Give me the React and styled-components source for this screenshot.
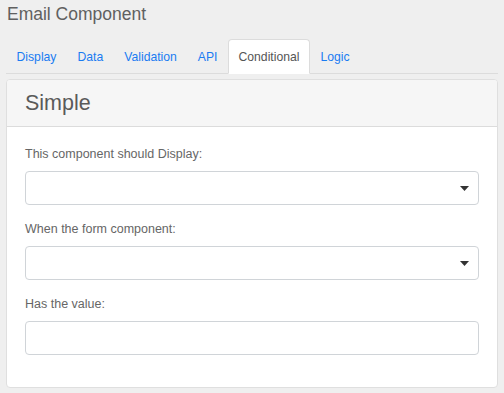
import React from "react"
import styled, { createGlobalStyle } from "styled-components"

const GlobalStyle = createGlobalStyle`
  html, body {
    margin: 0;
    padding: 0;
    background: #efefef;
    font-family: "Liberation Sans", Arial, sans-serif;
  }
`

const Page = styled.div`
  padding: 3px 6px 6px 6px;
  width: 504px;
  height: 393px;
  box-sizing: border-box;
`

const Title = styled.h4`
  margin: 0 0 0 1px;
  font-size: 17.5px;
  font-weight: normal;
  line-height: 22px;
  color: #606060;
`

const Tabs = styled.ul`
  display: flex;
  list-style: none;
  margin: 14px 0 0 0;
  padding: 0;
  border-bottom: 1px solid #dcdcdc;
`

const Tab = styled.li`
  height: 33px;
  padding: 0 9.5px;
  margin-bottom: -1px;
  display: flex;
  align-items: center;
  font-size: 12.2px;
  color: ${({ active }) => (active ? "#555" : "#1a7cf2")};
  background: ${({ active }) => (active ? "#fff" : "transparent")};
  border: 1px solid ${({ active }) => (active ? "#dcdcdc" : "transparent")};
  border-bottom-color: ${({ active }) => (active ? "#fff" : "transparent")};
  border-radius: 4px 4px 0 0;
`

const Card = styled.div`
  margin-top: 5px;
  width: 492px;
  box-sizing: border-box;
  background: #fff;
  border: 1px solid #dfdfdf;
  border-radius: 4px;
  overflow: hidden;
`

const CardHeader = styled.div`
  background: #f6f6f6;
  border-bottom: 1px solid #dcdcdc;
  height: 46px;
  display: flex;
  align-items: center;
  padding: 0 18px;
`

const CardTitle = styled.h3`
  margin: 0;
  font-size: 21.5px;
  font-weight: normal;
  color: #5a5a5a;
`

const CardBody = styled.div`
  padding: 18px 18px 17px 18px;
  display: flex;
  flex-direction: column;
  gap: 15px;
`

const Group = styled.div`
  display: flex;
  flex-direction: column;
  gap: 8px;
  &:last-child {
    margin-bottom: 15px;
  }
`

const Label = styled.label`
  font-size: 12.5px;
  line-height: 18px;
  color: #666;
`

const Field = styled.div`
  height: 34px;
  box-sizing: border-box;
  border: 1px solid #d0d4d8;
  border-radius: 4px;
  background: #fff;
  display: flex;
  align-items: center;
  justify-content: flex-end;
  padding-right: 9px;
`

const Caret = () => (
  <svg width="9" height="5" viewBox="0 0 9 5">
    <path d="M0 0 H9 L4.5 5 Z" fill="#333" />
  </svg>
)

const tabs = ["Display", "Data", "Validation", "API", "Conditional", "Logic"]

const App = () => {
  return (
    <>
      <GlobalStyle />
      <Page>
        <Title>Email Component</Title>
        <Tabs>
          {tabs.map((t) => (
            <Tab key={t} active={t === "Conditional" ? 1 : 0}>
              {t}
            </Tab>
          ))}
        </Tabs>
        <Card>
          <CardHeader>
            <CardTitle>Simple</CardTitle>
          </CardHeader>
          <CardBody>
            <Group>
              <Label>This component should Display:</Label>
              <Field>
                <Caret />
              </Field>
            </Group>
            <Group>
              <Label>When the form component:</Label>
              <Field>
                <Caret />
              </Field>
            </Group>
            <Group>
              <Label>Has the value:</Label>
              <Field />
            </Group>
          </CardBody>
        </Card>
      </Page>
    </>
  )
}

export default App
